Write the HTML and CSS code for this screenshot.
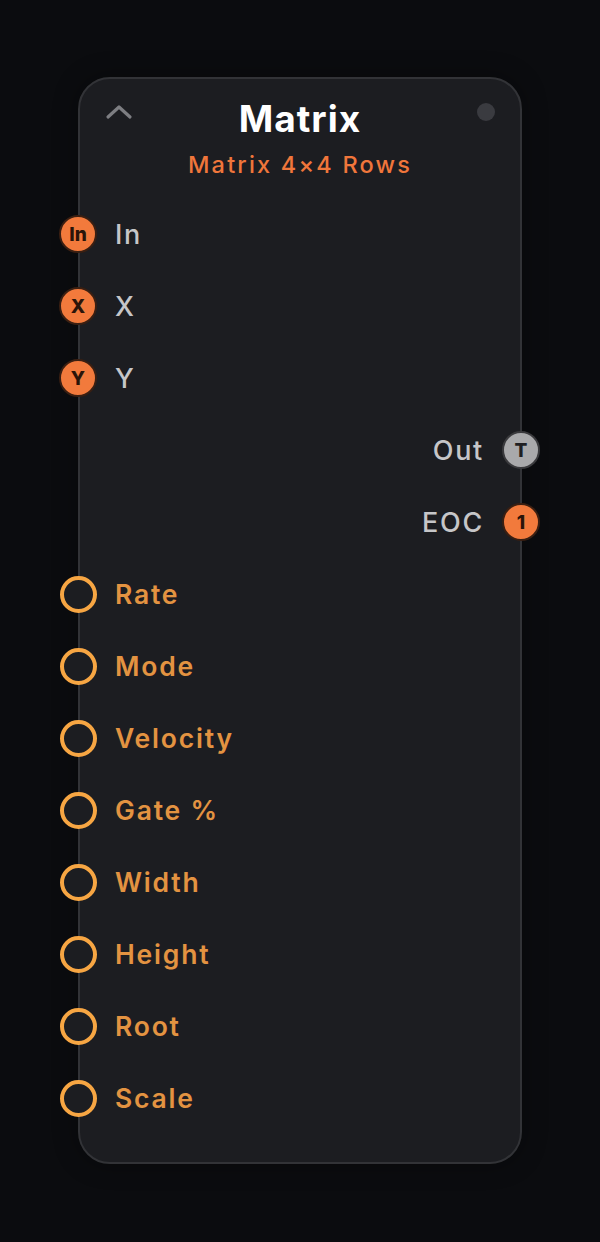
FILE: index.html
```
<!DOCTYPE html>
<html>
<head>
<meta charset="utf-8">
<link rel="stylesheet" href="styles.css">
</head>
<body>
<div class="stage">
  <div class="card">
    <div class="header">
      <svg class="chevron" width="28" height="16" viewBox="0 0 28 16"><path d="M3 13 L14 3 L25 13" fill="none" stroke="#7d7e82" stroke-width="3.2" stroke-linecap="round" stroke-linejoin="round"/></svg>
      <div class="titles">
        <div class="title">Matrix</div>
        <div class="subtitle">Matrix 4×4 Rows</div>
      </div>
      <span class="dot"></span>
    </div>
    <div class="rows">
      <div class="row left"><span class="port filled">In</span><span class="label">In</span></div>
      <div class="row left"><span class="port filled">X</span><span class="label">X</span></div>
      <div class="row left"><span class="port filled">Y</span><span class="label">Y</span></div>
      <div class="row right"><span class="label">Out</span><span class="port gray">T</span></div>
      <div class="row right"><span class="label">EOC</span><span class="port filled">1</span></div>
      <div class="row left"><span class="port ring"></span><span class="label param">Rate</span></div>
      <div class="row left"><span class="port ring"></span><span class="label param">Mode</span></div>
      <div class="row left"><span class="port ring"></span><span class="label param">Velocity</span></div>
      <div class="row left"><span class="port ring"></span><span class="label param">Gate %</span></div>
      <div class="row left"><span class="port ring"></span><span class="label param">Width</span></div>
      <div class="row left"><span class="port ring"></span><span class="label param">Height</span></div>
      <div class="row left"><span class="port ring"></span><span class="label param">Root</span></div>
      <div class="row left"><span class="port ring"></span><span class="label param">Scale</span></div>
    </div>
  </div>
</div>
</body>
</html>
```
FILE: styles.css
```
html, body {
  margin: 0;
  padding: 0;
  background: #0b0c0f;
}
body {
  width: 600px;
  height: 1242px;
  font-family: Inter, "Noto Sans", sans-serif;
}
.stage {
  padding-top: 77px;
  display: flex;
  justify-content: center;
}
.card {
  box-sizing: border-box;
  width: 444px;
  height: 1087px;
  background: #1c1d21;
  border: 2px solid #323337;
  border-radius: 32px;
  box-shadow: 0 0 24px rgba(0,0,0,0.35);
}
.header {
  display: grid;
  grid-template-columns: 1fr auto 1fr;
  padding-top: 18px;
}
.chevron {
  justify-self: start;
  margin-left: 25px;
  margin-top: 7px;
}
.dot {
  justify-self: end;
  margin-right: 25px;
  margin-top: 6px;
  width: 18px;
  height: 18px;
  border-radius: 50%;
  background: #3a3b40;
}
.titles {
  display: flex;
  flex-direction: column;
  align-items: center;
}
.title {
  color: #ffffff;
  font-size: 37px;
  font-weight: 700;
  line-height: 44px;
  letter-spacing: 1px;
}
.subtitle {
  margin-top: 9px;
  color: #f0763b;
  font-size: 23.5px;
  font-weight: 500;
  line-height: 30px;
  letter-spacing: 2.2px;
}
.rows {
  margin-top: 18px;
  display: flex;
  flex-direction: column;
}
.row {
  height: 72px;
  display: flex;
  align-items: center;
  gap: 18px;
}
.row.left {
  margin-left: -21px;
}
.row.right {
  justify-content: flex-end;
  margin-right: -20px;
}
.label {
  color: #c6c6c8;
  font-size: 27px;
  font-weight: 500;
  letter-spacing: 1.7px;
}
.label.param {
  color: #e39341;
  font-weight: 600;
  font-size: 26.5px;
  letter-spacing: 1.8px;
}
.port {
  box-sizing: border-box;
  width: 38px;
  height: 38px;
  border-radius: 50%;
  display: flex;
  align-items: center;
  justify-content: center;
  font-size: 19px;
  font-weight: 800;
  flex: none;
}
.port.filled {
  background: #f27a3c;
  border: 2px solid #3a1f12;
  color: #2a1409;
}
.port.gray {
  background: #a9a9ab;
  border: 2px solid #3a3a3d;
  color: #1f1f22;
}
.port.ring {
  width: 37px;
  height: 37px;
  margin-left: 1px;
  border: 4px solid #f7a643;
  background: #1c1d21;
}
```
